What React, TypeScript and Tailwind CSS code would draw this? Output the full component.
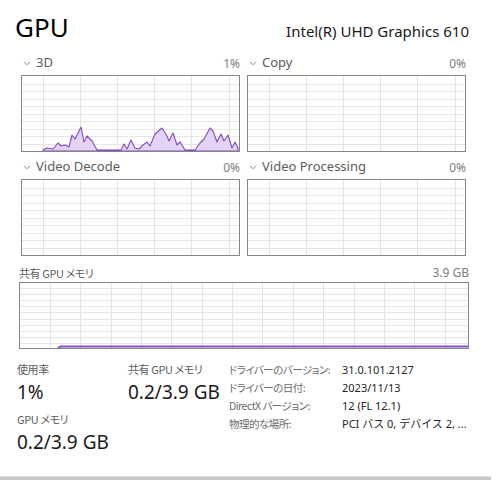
import type { ReactNode } from "react";

type Pt = [number, number];

// 3D usage trace, in page pixels (chart box starts at 21,76)
const usage3d: Pt[] = [
  [43, 152], [43, 151], [47, 149], [53, 150], [58, 144], [61, 147], [65, 146], [69, 148],
  [72, 136], [75, 140], [81, 128], [84, 143], [87, 137], [92, 142], [97, 151], [121, 151],
  [124, 145], [127, 150], [131, 141], [135, 149], [139, 150], [143, 146], [147, 143],
  [150, 147], [155, 135], [162, 129], [167, 137], [169, 142], [173, 134], [177, 146],
  [180, 143], [185, 151], [195, 151], [200, 144], [204, 140], [210, 129], [213, 132],
  [217, 143], [221, 135], [224, 142], [228, 136], [232, 149], [235, 143], [238, 149], [238, 152],
];

function Chevron() {
  return (
    <svg width="8" height="5" viewBox="0 0 8 5" className="shrink-0">
      <path d="M1 0.8 L4 3.8 L7 0.8" fill="none" stroke="#8c8c8c" strokeWidth="1" />
    </svg>
  );
}

function GridLines({
  w,
  h,
  xStart,
  xStep,
  yStart,
  yStep,
}: {
  w: number;
  h: number;
  xStart: number;
  xStep: number;
  yStart: number;
  yStep: number;
}) {
  const xs: number[] = [];
  for (let x = xStart; x < w; x += xStep) xs.push(Math.round(x) + 0.5);
  const ys: number[] = [];
  for (let y = yStart; y < h - 1; y += yStep) ys.push(Math.round(y) + 0.5);
  return (
    <g shapeRendering="crispEdges">
      {ys.map((y) => (
        <line key={`h${y}`} x1={0} x2={w} y1={y} y2={y} stroke="#e6e6e6" strokeWidth="1" />
      ))}
      {xs.map((x) => (
        <line key={`v${x}`} x1={x} x2={x} y1={0} y2={h} stroke="#e2e2e2" strokeWidth="1" />
      ))}
    </g>
  );
}

function SmallChart({ data }: { data?: Pt[] }) {
  const w = 217;
  const h = 75;
  const pts = data?.map(([x, y]) => `${x - 22},${y - 77}`).join(" ");
  return (
    <div className="h-[77px] w-full border border-[#858585] bg-white">
      <svg width={w} height={h} viewBox={`0 0 ${w} ${h}`} className="block">
        <GridLines w={w} h={h} xStart={21} xStep={37.1} yStart={7.5} yStep={7.5} />
        {pts ? (
          <polygon points={pts} fill="#e3d4f6" stroke="#8149c0" strokeWidth="1.1" strokeLinejoin="round" />
        ) : null}
      </svg>
    </div>
  );
}

function ChartLabel({ name, value }: { name: string; value: string }) {
  return (
    <div className="flex h-[20px] items-center justify-between">
      <div className="flex items-center gap-[5px] pl-[2px]">
        <Chevron />
        <span className="text-[13px] text-[#5c5c5c]">{name}</span>
      </div>
      <span className="pt-[1px] text-[12px] text-[#7c7c7c]">{value}</span>
    </div>
  );
}

function Cell({ name, value, data }: { name: string; value: string; data?: Pt[] }) {
  return (
    <div className="flex flex-col gap-[2px]">
      <ChartLabel name={name} value={value} />
      <SmallChart data={data} />
    </div>
  );
}

// Japanese labels: CJK face with proportional kana, like Yu Gothic UI
const jp = "font-['Noto_Sans_CJK_JP',sans-serif] [font-feature-settings:'palt'_1]";

function Stat({ label, value }: { label: string; value: string }) {
  return (
    <div className="flex flex-col pb-[4px]">
      <span className={`${jp} h-[18px] whitespace-nowrap text-[11px] leading-[18px] tracking-[-0.4px] text-[#5c5c5c]`}>
        {label}
      </span>
      <span className="h-[28px] whitespace-nowrap text-[19px] leading-[28px] text-[#1a1a1a]">{value}</span>
    </div>
  );
}

function InfoRow({ label, children }: { label: string; children: ReactNode }) {
  return (
    <>
      <span className={`${jp} whitespace-nowrap text-[10.5px] tracking-[-0.5px] text-[#6b6b6b]`}>{label}</span>
      <span className="whitespace-nowrap text-[11px] text-[#262626]">{children}</span>
    </>
  );
}

export default function App() {
  const sw = 448;
  const sh = 65;
  return (
    <div className="relative flex h-[480px] w-[492px] flex-col overflow-hidden bg-white font-['Noto_Sans','Noto_Sans_CJK_JP',sans-serif] text-[#1a1a1a]">
      <div className="flex h-[48px] items-baseline justify-between pl-[15px] pr-[23px] pt-[10px]">
        <h1 className="text-[26px] leading-[34px] text-black">GPU</h1>
        <span className="text-[15px] text-[#1a1a1a]">Intel(R) UHD Graphics 610</span>
      </div>

      <div className="mt-[5px] grid grid-cols-2 gap-x-[7px] gap-y-[5px] pl-[21px] pr-[26px]">
        <Cell name="3D" value="1%" data={usage3d} />
        <Cell name="Copy" value="0%" />
        <Cell name="Video Decode" value="0%" />
        <Cell name="Video Processing" value="0%" />
      </div>

      <div className="mt-[8px] flex flex-col pl-[19px] pr-[23px]">
        <div className="flex h-[18px] items-center justify-between">
          <span className={`${jp} text-[11px] tracking-[-0.4px] text-[#5c5c5c]`}>共有 GPU メモリ</span>
          <span className="text-[12px] text-[#7c7c7c]">3.9 GB</span>
        </div>
        <div className="h-[67px] w-full border border-[#858585] bg-white">
          <svg width={sw} height={sh} viewBox={`0 0 ${sw} ${sh}`} className="block">
            <GridLines w={sw} h={sh} xStart={30} xStep={30.35} yStart={5} yStep={6.1} />
            <polyline points={`38,65 41,63.5 ${sw},63.5`} fill="none" stroke="#8a4fc8" strokeWidth="2" />
          </svg>
        </div>
      </div>

      <div className="mt-[11px] flex pl-[17px]">
        <div className="flex w-[111px] flex-col">
          <Stat label="使用率" value="1%" />
          <Stat label="GPU メモリ" value="0.2/3.9 GB" />
        </div>
        <div className="w-[101px]">
          <Stat label="共有 GPU メモリ" value="0.2/3.9 GB" />
        </div>
        <div className="grid grid-cols-[113px_1fr] auto-rows-[18px] items-center pt-[1px]">
          <InfoRow label="ドライバーのバージョン:">31.0.101.2127</InfoRow>
          <InfoRow label="ドライバーの日付:">2023/11/13</InfoRow>
          <InfoRow label="DirectX バージョン:">12 (FL 12.1)</InfoRow>
          <InfoRow label="物理的な場所:">PCI バス 0, デバイス 2, ...</InfoRow>
        </div>
      </div>

      <div className="absolute bottom-0 left-0 h-[4px] w-[491px] border-t border-[#e2e2e2] bg-[#c8c8c8]" />
    </div>
  );
}
